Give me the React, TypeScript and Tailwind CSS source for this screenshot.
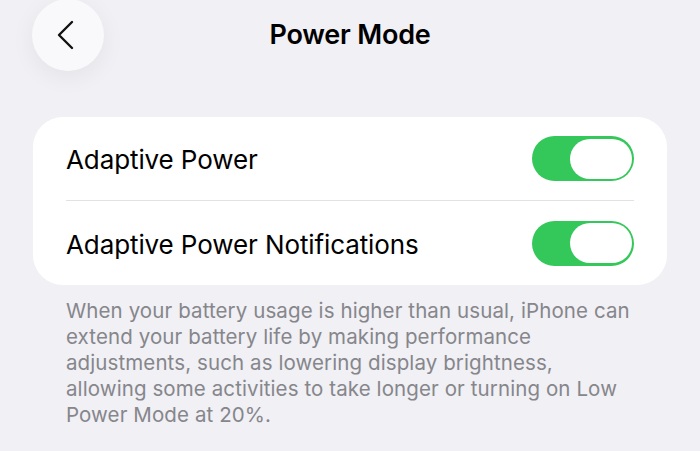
import React from "react";

function Toggle() {
  return (
    <div className="flex h-[45px] w-[102px] items-center justify-end rounded-full bg-[#34c759] p-[2.5px]">
      <div className="h-[40px] w-[62px] rounded-full bg-white" />
    </div>
  );
}

function Row({ label, last }: { label: string; last?: boolean }) {
  return (
    <div className="px-[33px]">
      <div
        className={
          "flex h-[84px] items-center justify-between " +
          (last ? "" : "border-b border-[#e1e1e6]")
        }
      >
        <span className="pt-[2px] text-[26px] tracking-[-0.1px] text-black">{label}</span>
        <Toggle />
      </div>
    </div>
  );
}

export default function App() {
  return (
    <div
      className="h-[451px] w-[700px] overflow-hidden bg-[#f0f0f5]"
      style={{ fontFamily: "Inter, 'Noto Sans', sans-serif" }}
    >
      {/* header */}
      <div className="grid grid-cols-[72px_1fr_72px] items-center px-[32px]">
        <button className="-mt-[1px] flex h-[72px] w-[72px] items-center justify-center rounded-full bg-[#f9f9fb] shadow-[0_6px_24px_rgba(0,0,0,0.06)]">
          <svg width="20" height="30" viewBox="0 0 20 30" fill="none" className="-ml-[4px]">
            <path
              d="M16 2 L3 15 L16 28"
              stroke="#111"
              strokeWidth="2.4"
              strokeLinecap="round"
              strokeLinejoin="round"
            />
          </svg>
        </button>
        <h1 className="text-center text-[27px] font-semibold tracking-[-0.2px] text-black">
          Power Mode
        </h1>
        <div />
      </div>

      {/* settings group */}
      <div className="mx-[33px] mt-[46px] rounded-[30px] bg-white">
        <Row label="Adaptive Power" />
        <Row label="Adaptive Power Notifications" last />
      </div>

      <p className="mt-[13px] whitespace-nowrap pl-[66px] text-[20.5px] leading-[26px] tracking-[0.1px] text-[#86868b]">
        When your battery usage is higher than usual, iPhone can
        <br />
        extend your battery life by making performance
        <br />
        adjustments, such as lowering display brightness,
        <br />
        allowing some activities to take longer or turning on Low
        <br />
        Power Mode at 20%.
      </p>
    </div>
  );
}
